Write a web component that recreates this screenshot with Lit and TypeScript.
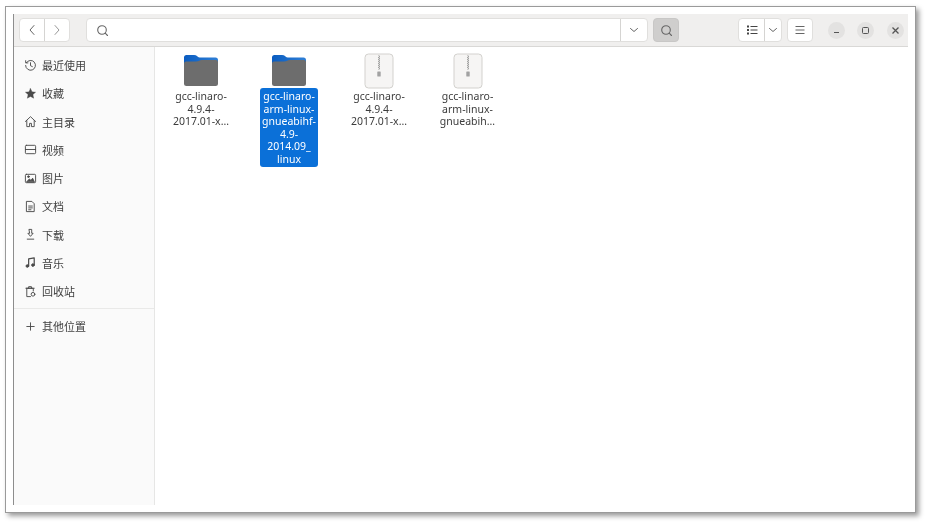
import { LitElement, html, css, svg } from "lit";
import { customElement } from "lit/decorators.js";

const ic = (c: unknown, w = 13) => html`<svg class="ic" width=${w} height=${w} viewBox="0 0 14 14" fill="none" stroke="currentColor" stroke-width="1" stroke-linecap="round" stroke-linejoin="round">${c}</svg>`;

const places = [
  ["最近使用", svg`<path d="M2.500 4A5.300 5.300 0 1 1 1.700 7"/><path d="M1.800 1.800v2.400h2.400"/><path d="M7 4v3.200l2 1"/>`],
  ["收藏", svg`<path fill="currentColor" stroke-width=".4" d="M7 1.600l1.600 3.600 3.900.4-2.900 2.600.8 3.900L7 10.100l-3.400 2 .8-3.900L1.500 5.600l3.900-.4z"/>`],
  ["主目录", svg`<path d="M1.500 7L7 1.800 12.500 7"/><path d="M3 6v6.500h3V9h2v3.500h3V6"/>`],
  ["视频", svg`<rect x="1.500" y="2.500" width="11" height="9" rx="1"/><path d="M1.500 7h11"/>`],
  ["图片", svg`<rect x="1.500" y="2.500" width="11" height="9" rx="1"/><path fill="currentColor" d="M3 10.500l2.800-3 1.700 1.600 1.800-2.400 1.700 3.800z"/><circle cx="4.800" cy="5" r=".9" fill="currentColor"/>`],
  ["文档", svg`<path d="M3 1.500h5.500L11 4v8.500H3z"/><path d="M5 6.500h4M5 8.500h4M5 10.500h2.500"/>`],
  ["下载", svg`<path d="M5.700 1.500h2.600v4.200h1.500L7 9 4.200 5.700h1.500z"/><path d="M3.500 12h7"/>`],
  ["音乐", svg`<path stroke-width="1.300" d="M5 10.500V3l6-1v7.500"/><circle cx="3.600" cy="10.800" r="1.400" fill="currentColor"/><circle cx="9.600" cy="9.800" r="1.400" fill="currentColor"/>`],
  ["回收站", svg`<path d="M3 3.500h7v3M3 3.500v9h4M2 3.500h9M5 3.500V1.800h3v1.700"/><circle cx="9.700" cy="10" r="2"/>`],
] as const;

const files = [
  { kind: "folder", name: "gcc-linaro-\n4.9.4-\n2017.01-x...", sel: false },
  { kind: "folder", name: "gcc-linaro-\narm-linux-\ngnueabihf-\n4.9-\n2014.09_\nlinux", sel: true },
  { kind: "zip", name: "gcc-linaro-\n4.9.4-\n2017.01-x...", sel: false },
  { kind: "zip", name: "gcc-linaro-\narm-linux-\ngnueabih...", sel: false },
];

const chevDown = html`<svg width="10" height="10" viewBox="0 0 10 10" fill="none" stroke="currentColor" stroke-width="1" stroke-linecap="round" stroke-linejoin="round"><path d="M1.500 3.500L5 6.500l3.500-3"/></svg>`;
const magnifier = html`<svg width="13" height="13" viewBox="0 0 13 13" fill="none" stroke="currentColor" stroke-width="1.100" stroke-linecap="round"><circle cx="6" cy="6" r="4.300"/><path d="M9.200 9.200l2.300 2.300"/></svg>`;

const folderIcon = html`<svg width="36" height="33" viewBox="0 0 36 33"><defs><linearGradient id="fb" x1="0" x2="1" y1="0" y2="0"><stop offset="0" stop-color="#0a5cc0"/><stop offset="1" stop-color="#2f7fd6"/></linearGradient></defs><path fill="url(#fb)" d="M1 14V3.500Q1 1 3.500 1h7.500q2 0 3 1 l.8 .8q.7 .7 2 .7H32.500Q35 3.500 35 6V14z"/><path fill="#6d6d6d" d="M1 9.500Q1 7.500 3 7.500H13q2 0 3.200-.8 1-.7 2.500-.7H33q2 0 2 2V29.500Q35 32 32.500 32H3.500Q1 32 1 29.500z"/></svg>`;

const zipIcon = html`<svg class="zip" width="30" height="36" viewBox="0 0 30 36"><rect x="1" y="1" width="28" height="34" rx="3.500" fill="#f6f5f4" stroke="#d3d1ce"/><path d="M14.500 2.500l1.500 1-1.800 1 1.800 1-1.800 1 1.800 1-1.800 1 1.800 1-1.800 1 1.800 1-1.800 1 1.800 1-1.800 1 1.800 1-1.500 1" fill="none" stroke="#8f8f8f" stroke-width=".8"/><rect x="13.300" y="18.500" width="3.400" height="5" rx=".6" fill="#a2a2a2"/></svg>`;

@customElement("app-root")
export class AppRoot extends LitElement {
  static styles = css`
    :host { display: block; height: 522px; box-sizing: border-box; padding: 6px 10px 9px 5px; background: #fff;
      font-family: "Noto Sans", "Noto Sans CJK SC", sans-serif; color: #3d3d3d; }
    .frame { height: 100%; box-sizing: border-box; border: 1px solid #9a9a9a; background: #fff; padding: 7px;
      box-shadow: 3px 3px 5px rgba(0,0,0,.4); filter: blur(.35px); }
    .win { height: 100%; display: flex; flex-direction: column; border-left: 1px solid #8d8d8d; }
    .bar { height: 33px; flex: none; box-sizing: border-box; background: #f0efee; border-bottom: 1px solid #d9d8d6;
      display: flex; align-items: center; padding: 0 0 0 5px; }
    .btn { height: 24px; box-sizing: border-box; background: #fff; border: 1px solid #e0dfdd; border-radius: 4px; display: flex; align-items: stretch; color: #666; flex: none; }
    .btn > span { display: flex; align-items: center; justify-content: center; }
    .btn > span + span { border-left: 1px solid #d5d4d2; }
    .nav { width: 51px; } .nav > span { flex: 1; }
    .search { width: 562px; margin-left: 16px; }
    .search .in { flex: 1; justify-content: flex-start; padding-left: 9px; }
    .search .dd { width: 26px; }
    .go { width: 26px; margin-left: 5px; background: #cfcecd; border-color: #c8c7c6; align-items: center; justify-content: center; }
    .view { width: 44px; margin-left: 59px; } .view .a { width: 25px; } .view .b { flex: 1; }
    .menu { width: 26px; margin-left: 5px; align-items: center; justify-content: center; }
    .wc { width: 17px; height: 17px; border-radius: 50%; background: #e3e2e1; display: flex; align-items: center; justify-content: center; flex: none; color: #555; margin-left: 12.700px; }
    .wc.first { margin-left: 14.500px; }
    .body { flex: 1; display: flex; min-height: 0; background: #fff; }
    .side { width: 141px; flex: none; box-sizing: border-box; background: #fafafa; border-right: 1px solid #e6e6e5; padding-top: 4px; }
    .row { height: 28.250px; display: flex; align-items: center; gap: 5px; padding-left: 10px; font-size: 11px; color: #3f3f3f; font-family: "Noto Sans CJK SC", sans-serif; }
    .ic { flex: none; color: #4a4a4a; }
    .sep { height: 1px; background: #e9e9e8; margin: 3px 0; }
    .grid { flex: 1; display: flex; align-items: flex-start; padding: 5px 0 0 17px; }
    .file { width: 58px; margin-right: 30px; display: flex; flex-direction: column; align-items: center; color: #3c3c3c; }
    .file:nth-child(2) { margin-right: 32px; }
    .file:nth-child(3) { margin-right: 30.500px; }
    .file .pic { height: 35px; display: flex; align-items: flex-end; justify-content: center; flex: none; }
    .zip { margin-bottom: -2px; }
    .file .name { margin-top: 1px; padding: 2px 0 1.500px; width: 100%; box-sizing: border-box; border-radius: 3px; font-size: 10.500px; line-height: 12.500px; text-align: center; white-space: pre; }
    .file.sel .name { background: #0b70d8; color: #fff; }
  `;

  render() {
    return html`<div class="frame"><div class="win">
      <div class="bar">
        <div class="btn nav">
          <span><svg width="10" height="12" viewBox="0 0 10 12" fill="none" stroke="currentColor" stroke-linecap="round" stroke-linejoin="round"><path d="M7 1.500L3 6l4 4.500"/></svg></span>
          <span><svg width="10" height="12" viewBox="0 0 10 12" fill="none" stroke="#999" stroke-linecap="round" stroke-linejoin="round"><path d="M3 1.500L7 6l-4 4.500"/></svg></span>
        </div>
        <div class="btn search"><span class="in">${magnifier}</span><span class="dd">${chevDown}</span></div>
        <div class="btn go">${magnifier}</div>
        <div class="btn view">
          <span class="a"><svg width="12" height="12" viewBox="0 0 12 12" stroke="#444" stroke-width="1"><path d="M4.500 2.500h7M4.500 6h7M4.500 9.500h7"/><path stroke-width="2" d="M1 1.500h2M1 5h2M1 8.500h2" transform="translate(0 1)"/></svg></span>
          <span class="b">${chevDown}</span>
        </div>
        <div class="btn menu"><svg width="12" height="12" viewBox="0 0 12 12" stroke="#666" stroke-width="1"><path d="M1.500 2.500h9M1.500 6h9M1.500 9.500h9"/></svg></div>
        <div class="wc first"><svg width="9" height="9" viewBox="0 0 9 9" stroke="currentColor"><path d="M2 6.500h5"/></svg></div>
        <div class="wc"><svg width="9" height="9" viewBox="0 0 9 9" fill="none" stroke="currentColor"><rect x="1.500" y="1.500" width="6" height="6" rx="1"/></svg></div>
        <div class="wc"><svg width="9" height="9" viewBox="0 0 9 9" fill="none" stroke="currentColor" stroke-width="1.300"><path d="M1.500 1.500l6 6M7.500 1.500l-6 6"/></svg></div>
      </div>
      <div class="body">
        <div class="side">
          ${places.map(([t, c]) => html`<div class="row">${ic(c)}<span>${t}</span></div>`)}
          <div class="sep"></div>
          <div class="row">${ic(svg`<path d="M7 3v8M3 7h8"/>`)}<span>其他位置</span></div>
        </div>
        <div class="grid">
          ${files.map((f) => html`<div class="file ${f.sel ? "sel" : ""}">
            <div class="pic">${f.kind === "folder" ? folderIcon : zipIcon}</div>
            <div class="name">${f.name}</div>
          </div>`)}
        </div>
      </div>
    </div></div>`;
  }
}
